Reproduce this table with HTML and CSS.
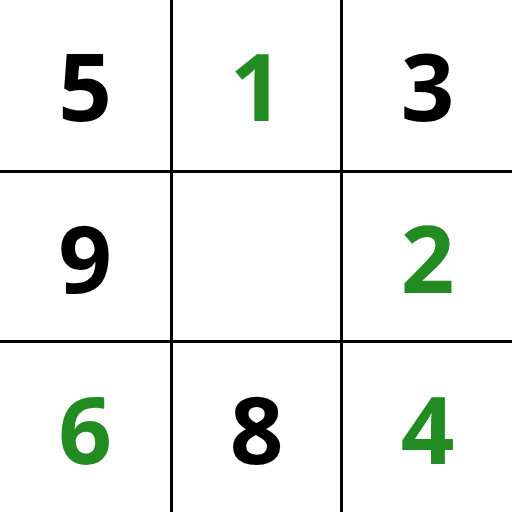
FILE: index.html
```html
<!DOCTYPE html>
<html>
<head>
<meta charset="utf-8">
<link rel="stylesheet" href="styles.css">
</head>
<body>
<div class="board">
  <div class="cell">5</div>
  <div class="cell given">1</div>
  <div class="cell">3</div>
  <div class="cell">9</div>
  <div class="cell"></div>
  <div class="cell given">2</div>
  <div class="cell given">6</div>
  <div class="cell">8</div>
  <div class="cell given">4</div>
</div>
</body>
</html>
```
FILE: styles.css
```css
html, body {
  margin: 0;
  padding: 0;
  background: #fff;
}
.board {
  width: 512px;
  height: 512px;
  display: grid;
  grid-template-columns: 170px 167px 169px;
  grid-template-rows: 170px 167px 169px;
  gap: 3px;
  background: #000;
}
.cell {
  background: #fff;
  display: flex;
  align-items: center;
  justify-content: center;
  font-family: "Open Sans", sans-serif;
  font-weight: 700;
  font-size: 94px;
  color: #000;
  line-height: 1;
}
.cell.given {
  color: #228b22;
}
```
